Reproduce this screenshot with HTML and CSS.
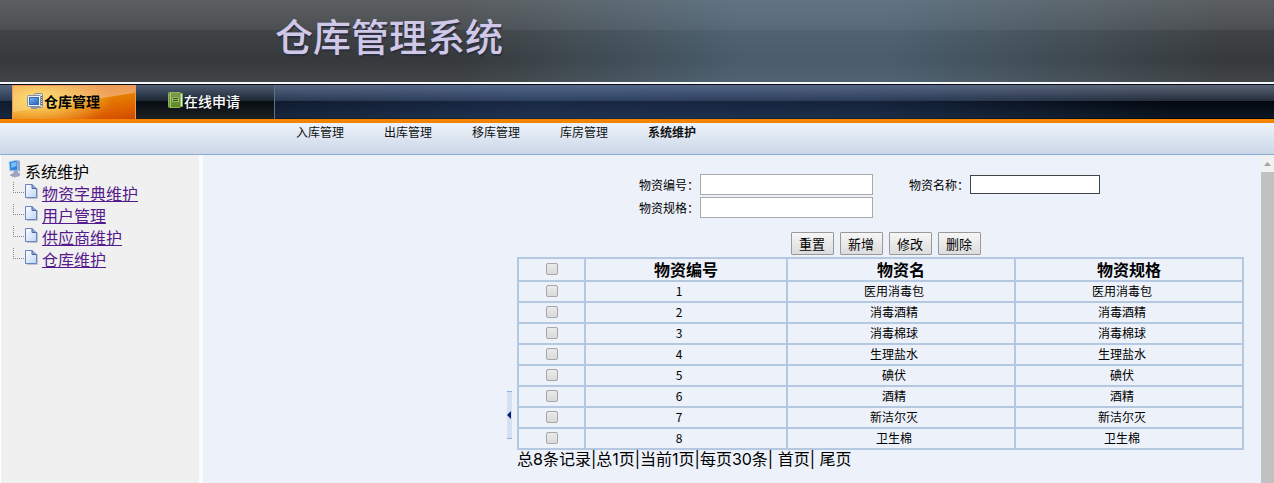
FILE: index.html
```html
<!DOCTYPE html>
<html lang="zh-CN">
<head>
  <meta charset="UTF-8" />
  <meta name="viewport" content="width=device-width, initial-scale=1.0" />
  <title>仓库管理系统</title>
  <link rel="stylesheet" href="styles.css">
</head>
<body>
  <!-- shared icons -->
  <svg class="defs" width="0" height="0">
    <defs>
      <linearGradient id="pageFill" x1="0" y1="0" x2="1" y2="1">
        <stop offset="0" stop-color="#fff" />
        <stop offset="1" stop-color="#bcd6f7" />
      </linearGradient>
      <linearGradient id="screenFill" x1="0" y1="0" x2="1" y2="1">
        <stop offset="0" stop-color="#7db4f0" />
        <stop offset="1" stop-color="#2560b8" />
      </linearGradient>
      <linearGradient id="bookFill" x1="0" y1="0" x2="0" y2="1">
        <stop offset="0" stop-color="#7d9a50" />
        <stop offset="1" stop-color="#5c8a1e" />
      </linearGradient>
    </defs>
    <symbol id="page" viewBox="0 0 14 16">
      <path d="M3 15.5h10.5V5" fill="none" stroke="#c4c4cc" />
      <path d="M1.5 1.5H8L12.5 5.5V14.5H1.5Z" fill="url(#pageFill)" stroke="#6a83bd" />
      <path d="M8 1.5V5.5H12.5" fill="#8ba5d8" stroke="#4a66a8" />
    </symbol>
  </svg>

  <header class="banner">
    <h1>仓库管理系统</h1>
  </header>

  <nav class="tabs">
    <a class="tab active" href="#">
      <svg width="17" height="17" viewBox="0 0 17 17">
        <rect x="7.5" y="0.5" width="8" height="14" rx="1" fill="#e0e0e0" stroke="#858991" />
        <path d="M14.5 3v10" stroke="#555" stroke-dasharray="1 1" />
        <rect x="0.5" y="2.5" width="13" height="11" rx="1" fill="#eef1f6" stroke="#8290a8" />
        <rect x="2.5" y="4.5" width="9" height="7" fill="url(#screenFill)" stroke="#3469b5" />
        <path d="M4 15h6" stroke="#8d939e" stroke-width="2" />
      </svg>仓库管理
    </a>
    <a class="tab" href="#">
      <svg width="16" height="17" viewBox="0 0 16 17">
        <rect x="3.5" y="1.5" width="11" height="13" fill="#e5efcf" stroke="#7da24a" />
        <rect x="0.5" y="0.5" width="12" height="15" rx="1" fill="url(#bookFill)" stroke="#8db461" />
        <path d="M2.5 1v14" stroke="#a9cb7c" />
        <rect x="4" y="5" width="7" height="5" fill="#97b86c" />
        <path d="M5 6.5h5M5 8.5h5" stroke="#38540f" />
      </svg>在线申请
    </a>
  </nav>

  <nav class="subnav">
    <a href="#">入库管理</a>
    <a href="#">出库管理</a>
    <a href="#">移库管理</a>
    <a href="#">库房管理</a>
    <a class="current" href="#">系统维护</a>
  </nav>

  <div class="main">
    <aside class="sidebar">
      <div class="tree-root">
        <svg width="14" height="18" viewBox="0 0 14 18">
          <path d="M1 2l8-2 1 10-8 1z" fill="#2e83de" stroke="#a9c9ea" />
          <path d="M3 3l5-1 .5 4-5 2z" fill="#78c1fb" />
          <path d="M9 0l3 1v11l-2-2z" fill="#8ca6cc" />
          <path d="M6 11l3-1 1 3 2 1-1 2-5 1-4-2 4-2z" fill="#a0a4c4" stroke="#8589ad" stroke-width=".5" />
        </svg>
        <span>系统维护</span>
      </div>
      <ul class="tree">
        <li><svg width="14" height="16"><use href="#page" /></svg><a href="#">物资字典维护</a></li>
        <li><svg width="14" height="16"><use href="#page" /></svg><a href="#">用户管理</a></li>
        <li><svg width="14" height="16"><use href="#page" /></svg><a href="#">供应商维护</a></li>
        <li><svg width="14" height="16"><use href="#page" /></svg><a href="#">仓库维护</a></li>
      </ul>
    </aside>

    <div class="gutter">
      <button class="collapse" type="button" aria-label="收起"></button>
    </div>

    <main class="content">
      <form>
        <div class="search">
          <label for="code">物资编号：</label>
          <input type="text" id="code">
          <label for="name">物资名称：</label>
          <input type="text" id="name" class="short">
          <label for="spec">物资规格：</label>
          <input type="text" id="spec">
        </div>
        <div class="actions">
          <button type="reset">重置</button>
          <button type="button">新增</button>
          <button type="button">修改</button>
          <button type="button">删除</button>
        </div>
      </form>

      <table>
        <thead>
          <tr>
            <th class="check"><input type="checkbox" aria-label="全选"></th>
            <th class="code">物资编号</th>
            <th>物资名</th>
            <th>物资规格</th>
          </tr>
        </thead>
        <tbody>
          <tr><td><input type="checkbox" aria-label="1"></td><td>1</td><td>医用消毒包</td><td>医用消毒包</td></tr>
          <tr><td><input type="checkbox" aria-label="2"></td><td>2</td><td>消毒酒精</td><td>消毒酒精</td></tr>
          <tr><td><input type="checkbox" aria-label="3"></td><td>3</td><td>消毒棉球</td><td>消毒棉球</td></tr>
          <tr><td><input type="checkbox" aria-label="4"></td><td>4</td><td>生理盐水</td><td>生理盐水</td></tr>
          <tr><td><input type="checkbox" aria-label="5"></td><td>5</td><td>碘伏</td><td>碘伏</td></tr>
          <tr><td><input type="checkbox" aria-label="6"></td><td>6</td><td>酒精</td><td>酒精</td></tr>
          <tr><td><input type="checkbox" aria-label="7"></td><td>7</td><td>新洁尔灭</td><td>新洁尔灭</td></tr>
          <tr><td><input type="checkbox" aria-label="8"></td><td>8</td><td>卫生棉</td><td>卫生棉</td></tr>
        </tbody>
      </table>
      <div class="pager">总8条记录|总1页|当前1页|每页30条| <a href="#">首页</a>| <a href="#">尾页</a></div>
    </main>

    <div class="scrollbar">
      <svg width="13" height="17" viewBox="0 0 13 17"><path d="M3 11h7L6.5 7z" fill="#a3a3a3" /></svg>
      <div class="thumb"></div>
    </div>
  </div>
</body>
</html>
```
FILE: styles.css
```css
* {
  box-sizing: border-box;
}

body {
  margin: 0;
  min-height: 100vh;
  display: flex;
  flex-direction: column;
  font-family: "Noto Sans CJK SC", sans-serif;
  font-size: 12px;
  color: #000;
  background: #edf2fa;
}

.defs {
  position: absolute;
}

/* banner */
.banner {
  height: 84px;
  padding-left: 275px;
  border-bottom: 2px solid #f4f6fa;
  background:
    linear-gradient(90deg, rgba(104, 150, 185, 0) 36%, rgba(104, 150, 185, 0.38) 58%, rgba(104, 150, 185, 0.38) 70%, rgba(104, 150, 185, 0) 96%),
    linear-gradient(#5b5f61 0, #4c4f51 30px, #404446 30px, #35393b 60px, #404446 82px);
}

h1 {
  margin: 0;
  font-size: 38px;
  font-weight: 500;
  line-height: 70px;
  color: #cfc8e8;
  text-shadow: 1px 2px 1px #2b2e3c;
}

/* top tabs */
.tabs {
  display: flex;
  height: 39px;
  padding-left: 12px;
  border-top: 1px solid #0b0d16;
  border-bottom: 4px solid #f48400;
  background:
    linear-gradient(90deg, rgba(66, 104, 170, 0.2) 22%, rgba(66, 104, 170, 0.34) 42%, rgba(66, 104, 170, 0.28) 68%, rgba(66, 104, 170, 0) 92%),
    linear-gradient(#5c6577 0, #242d3a 16px, #03070f 16px, #0c1722 33px, #05070c 33px);
}

.tab {
  display: flex;
  align-items: center;
  width: 139px;
  padding: 0 0 3px 32px;
  border-right: 1px solid #5c7085;
  font-size: 14px;
  font-weight: 500;
  color: #fff;
  text-decoration: none;
  background: linear-gradient(#4f5e72 0, #1c2733 16px, #070c12 16px, #1b1f21 33px);
}

.tab.active {
  width: 124px;
  padding-left: 14px;
  font-weight: 700;
  color: #000;
  border: 1px solid #e99a5c;
  border-bottom: 0;
  background:
    radial-gradient(ellipse 75px 32px at 20% 40%, rgba(255, 228, 115, 0.95), rgba(255, 190, 60, 0)),
    linear-gradient(171deg, #e58f52 0, #f0a25a 49%, #e67e00 51%, #e06400 75%, #d04a00);
}

/* second level menu */
.subnav {
  display: flex;
  gap: 40px;
  height: 32px;
  padding-left: 296px;
  border-bottom: 1px solid #8aaad8;
  background: linear-gradient(#edf3fb, #cbd7e7);
}

.subnav a {
  line-height: 18px;
  color: #111;
  text-decoration: none;
}

.subnav .current {
  font-weight: 700;
}

.main {
  flex: 1;
  display: flex;
}

/* left tree */
.sidebar {
  width: 203px;
  padding: 5px 0 0 7px;
  font-size: 16px;
  line-height: 22px;
  background: #f0f0f0;
  border-left: 1px solid #fff;
  border-right: 4px solid #fafcff;
}

.tree-root {
  display: flex;
  gap: 3px;
  height: 22px;
}

.tree {
  margin: 0;
  padding: 0 0 0 5px;
  list-style: none;
}

.tree li {
  display: flex;
  height: 22px;
}

.tree li::before {
  content: "";
  width: 10px;
  height: 10px;
  border-left: 1px dotted #888;
  border-bottom: 1px dotted #888;
}

.tree svg {
  margin-top: 1px;
}

.tree a {
  margin-left: 4px;
  color: #551a8b;
}

/* splitter */
.gutter {
  width: 309px;
  display: flex;
  justify-content: flex-end;
  padding-top: 236px;
}

.collapse {
  display: flex;
  align-items: center;
  width: 5px;
  height: 48px;
  padding: 0;
  border: 0;
  border-top: 1px solid #8fb2e0;
  border-bottom: 1px solid #8fb2e0;
  background: #d3e1f3;
}

.collapse::before {
  content: "";
  border: 4px solid transparent;
  border-left: 0;
  border-right-color: #0a1f70;
}

/* content */
.content {
  flex: 1;
  padding: 19px 17px 0 5px;
}

.search {
  display: grid;
  grid-template-columns: 61px 209px 61px 152px;
  justify-content: center;
  align-items: center;
  row-gap: 2px;
}

.search input {
  width: 173px;
  height: 21px;
  border: 1px solid #a9a9a9;
  background: #fff;
}

.search .short {
  width: 130px;
  height: 19px;
  border-color: #444;
}

.actions {
  display: flex;
  justify-content: center;
  gap: 6px;
  margin: 14px 0 2px;
  padding-left: 10px;
}

.actions button {
  width: 43px;
  height: 23px;
  padding: 0;
  font-family: inherit;
  font-size: 13px;
  line-height: 20px;
  color: #000;
  border: 1px solid #999;
  border-radius: 1px;
  background: linear-gradient(#f6f6f6, #dcdcdc);
}

table {
  width: 100%;
  table-layout: fixed;
  border-collapse: collapse;
}

th,
td {
  height: 21px;
  padding: 0 0 1px;
  line-height: 18px;
  text-align: center;
  border: 2px solid #b5c8e1;
}

td {
  padding-right: 14px;
}

td:first-child {
  padding-right: 0;
}

th {
  height: 23px;
  padding-bottom: 2px;
  font-size: 16px;
  font-weight: 700;
}

.check {
  width: 67px;
}

.code {
  width: 202px;
}

table input {
  appearance: none;
  display: block;
  width: 12px;
  height: 12px;
  margin: 0 auto;
  border: 1px solid #a6a6a6;
  border-radius: 2px;
  background: linear-gradient(#eaeaea, #dadada);
}

.pager {
  font-family: Inter, "Noto Sans CJK SC", sans-serif;
  font-size: 16px;
  line-height: 18px;
}

.pager a {
  color: #000;
  text-decoration: none;
}

/* scroll track */
.scrollbar {
  display: flex;
  flex-direction: column;
  width: 13px;
  background: #f1f1f1;
}

.thumb {
  flex: 1;
  background: #c1c1c1;
}
```
